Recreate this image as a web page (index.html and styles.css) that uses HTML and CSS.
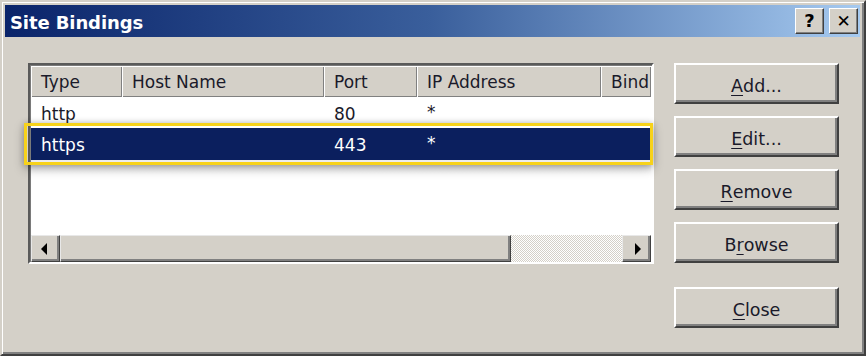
FILE: index.html
```html
<!DOCTYPE html>
<html>
<head>
<meta charset="utf-8">
<link rel="stylesheet" href="styles.css">
</head>
<body>
<div class="window">
  <div class="titlebar">
    <span class="title">Site Bindings</span>
    <div class="tbtns">
      <span class="tbtn help">?</span>
      <span class="tbtn close">&#x2715;</span>
    </div>
  </div>
  <div class="content">
    <div class="listwrap">
      <div class="list">
        <div class="grid header">
          <div class="hc">Type</div>
          <div class="hc">Host Name</div>
          <div class="hc">Port</div>
          <div class="hc">IP Address</div>
          <div class="hc">Bind</div>
        </div>
        <div class="grid row r1">
          <div class="c">http</div>
          <div class="c"></div>
          <div class="c">80</div>
          <div class="c star">*</div>
          <div class="c"></div>
        </div>
        <div class="grid row r2 sel">
          <div class="c">https</div>
          <div class="c"></div>
          <div class="c">443</div>
          <div class="c star">*</div>
          <div class="c"></div>
        </div>
        <div class="blank"></div>
        <div class="hscroll">
          <div class="sbtn"><span class="arr left"></span></div>
          <div class="thumb"></div>
          <div class="track"></div>
          <div class="sbtn"><span class="arr right"></span></div>
        </div>
      </div>
      <div class="callout"></div>
    </div>
    <div class="buttons">
      <div class="btn"><u>A</u>dd...</div>
      <div class="btn"><u>E</u>dit...</div>
      <div class="btn"><u>R</u>emove</div>
      <div class="btn">B<u>r</u>owse</div>
      <div class="btn closebtn"><u>C</u>lose</div>
    </div>
  </div>
</div>
</body>
</html>
```
FILE: styles.css
```css
html, body {
  margin: 0;
  padding: 0;
  background: #d4d0c8;
}
body {
  font-family: "DejaVu Sans", Verdana, sans-serif;
  font-size: 17px;
  color: #1a1a2a;
}
.window {
  width: 866px;
  height: 356px;
  box-sizing: border-box;
  background: #d4d0c8;
  border: 2px solid;
  border-color: #d4d0c8 #404040 #404040 #d4d0c8;
  box-shadow: inset 1px 1px #fff, inset -2px -2px #808080;
  padding: 3px 4px 3px 3px;
  display: flex;
  flex-direction: column;
}
.titlebar {
  height: 32px;
  background: linear-gradient(90deg, #0a246a 0%, #3a5f9c 50%, #a6caf0 100%);
  display: flex;
  align-items: center;
  justify-content: space-between;
  padding: 0 2px 0 5px;
}
.title {
  color: #fff;
  font-weight: bold;
  font-size: 18px;
  letter-spacing: -0.1px;
  position: relative;
  top: 1px;
}
.tbtns {
  display: flex;
  gap: 5px;
}
.tbtn {
  width: 29px;
  height: 26px;
  box-sizing: border-box;
  background: #d4d0c8;
  border: 1px solid;
  border-color: #fff #404040 #404040 #fff;
  box-shadow: inset -1px -1px #808080;
  display: flex;
  align-items: center;
  justify-content: center;
  color: #000;
  font-weight: bold;
  font-size: 18px;
  line-height: 1;
}
.tbtn.close {
  font-size: 17px;
}
.content {
  display: flex;
  padding: 26px 0 0 23px;
  gap: 20px;
}
.listwrap {
  position: relative;
  width: 626px;
  height: 201px;
}
.list {
  width: 626px;
  height: 201px;
  box-sizing: border-box;
  border: 2px solid;
  border-color: #5a5a5a #fff #fff #5a5a5a;
  box-shadow: inset 1px 1px #7a7a7a;
  background: #fff;
  display: flex;
  flex-direction: column;
  overflow: hidden;
  padding: 1px 1px 0 1px;
}
.grid {
  display: grid;
  grid-template-columns: 91px 202px 93px 184px 1fr;
  white-space: nowrap;
}
.header {
  height: 31px;
  background: #d4d0c8;
}
.hc {
  box-sizing: border-box;
  padding-left: 10px;
  line-height: 33px;
  box-shadow: inset 1px 1px #fff, inset -1px -1px #808080;
  overflow: hidden;
}
.row .c {
  padding-left: 10px;
  overflow: hidden;
}
.r1 {
  height: 31px;
  line-height: 34px;
}
.r2 {
  height: 32px;
  line-height: 34px;
}
.star {
  position: relative;
  top: -2px;
}
.sel {
  background: #0b1f5e;
  color: #fff;
}
.blank {
  flex: 1;
  background: linear-gradient(#ebebeb, #fff 14px);
}
.hscroll {
  height: 27px;
  display: flex;
  background: #d4d0c8;
}
.sbtn {
  width: 29px;
  box-sizing: border-box;
  border: 1px solid;
  border-color: #e8e8e8 #404040 #404040 #e8e8e8;
  box-shadow: inset -2px -2px #808080;
  display: flex;
  align-items: center;
  justify-content: center;
}
.thumb {
  width: 451px;
  box-sizing: border-box;
  border: 1px solid;
  border-color: #e8e8e8 #404040 #404040 #e8e8e8;
  box-shadow: inset -2px -2px #808080;
}
.track {
  flex: 1;
  background: repeating-conic-gradient(#fff 0 25%, #d4d0c8 0 50%) 0 0 / 2px 2px;
}
.arr {
  width: 0;
  height: 0;
  border-top: 6px solid transparent;
  border-bottom: 6px solid transparent;
}
.arr.left {
  border-right: 6px solid #000;
  margin-right: 4px;
}
.arr.right {
  border-left: 6px solid #000;
  margin-left: 2px;
}
.callout {
  position: absolute;
  left: -4px;
  top: 60px;
  width: 629px;
  height: 42px;
  box-sizing: border-box;
  border: 3px solid #f7d21a;
  box-shadow: 0 4px 10px rgba(0, 0, 0, 0.28), 0 0 6px rgba(0, 0, 0, 0.2);
}
.buttons {
  width: 165px;
  display: flex;
  flex-direction: column;
  gap: 12px;
}
.btn {
  height: 41px;
  box-sizing: border-box;
  border: 2px solid;
  border-color: #fff #404040 #404040 #fff;
  box-shadow: inset -2px -2px #808080;
  display: flex;
  align-items: center;
  justify-content: center;
  font-size: 17.5px;
  padding-top: 4px;
  white-space: pre;
}
.btn u {
  display: inline-block;
  text-underline-offset: 3px;
}
.closebtn {
  margin-top: 12px;
}
```
